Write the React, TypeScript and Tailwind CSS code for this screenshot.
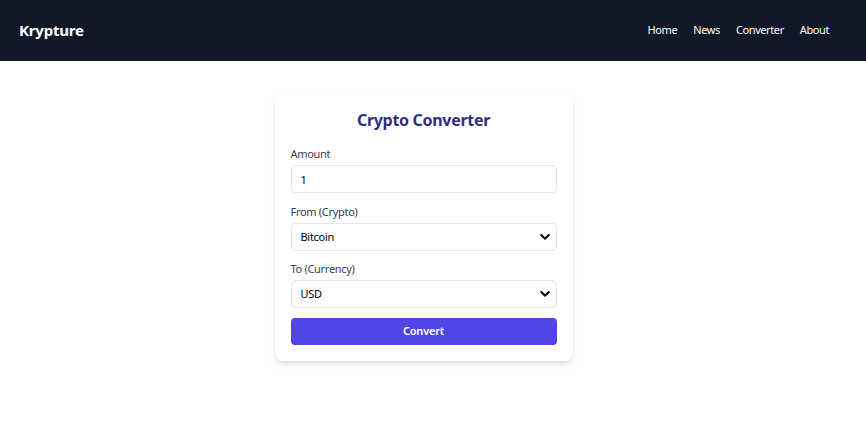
import { useState } from 'react'

function Chevron() {
  return (
    <svg
      viewBox="0 0 12 8"
      className="pointer-events-none absolute right-[7px] top-1/2 h-[7px] w-[10px] -translate-y-1/2"
      fill="none"
      stroke="#111"
      strokeWidth="2.6"
      strokeLinecap="round"
      strokeLinejoin="round"
    >
      <path d="M1.5 1.5 6 6l4.5-4.5" />
    </svg>
  )
}

export default function App() {
  const [amount, setAmount] = useState('1')
  const [crypto, setCrypto] = useState('bitcoin')
  const [currency, setCurrency] = useState('usd')

  return (
    <div className="min-h-screen bg-white font-['Noto_Sans',sans-serif]">
      <header className="flex h-[61px] items-center justify-between bg-[#111827] pl-[19px] pr-[37px]">
        <div className="text-[15px] font-bold tracking-[-0.2px] text-white">Krypture</div>
        <nav className="flex gap-4 text-[11px] tracking-[-0.4px] text-white">
          <a href="#">Home</a>
          <a href="#">News</a>
          <a href="#">Converter</a>
          <a href="#">About</a>
        </nav>
      </header>

      <main className="flex justify-center pr-[19px] pt-[32px]">
        <div className="w-[298px] rounded-lg bg-white p-4 shadow-md">
          <h1 className="mb-[14px] text-center text-[16px] font-bold leading-[22px] tracking-[-0.3px] text-[#312e81]">
            Crypto Converter
          </h1>

          <label className="mb-[2px] block text-[11px] leading-[18px] tracking-[-0.3px] text-[#374151]">Amount</label>
          <input
            value={amount}
            onChange={(e) => setAmount(e.target.value)}
            className="block h-[28px] w-full rounded border border-[#e5e7eb] px-[9px] text-[11px] tracking-[-0.3px] text-black outline-none"
          />

          <label className="mb-[2px] mt-[10px] block text-[11px] leading-[18px] tracking-[-0.3px] text-[#374151]">
            From (Crypto)
          </label>
          <div className="relative">
            <select
              value={crypto}
              onChange={(e) => setCrypto(e.target.value)}
              className="block h-[28px] w-full appearance-none rounded border border-[#e5e7eb] bg-white px-[9px] text-[11px] tracking-[-0.3px] text-black outline-none"
            >
              <option value="bitcoin">Bitcoin</option>
              <option value="ethereum">Ethereum</option>
            </select>
            <Chevron />
          </div>

          <label className="mb-[2px] mt-[9px] block text-[11px] leading-[18px] tracking-[-0.3px] text-[#374151]">
            To (Currency)
          </label>
          <div className="relative">
            <select
              value={currency}
              onChange={(e) => setCurrency(e.target.value)}
              className="block h-[28px] w-full appearance-none rounded border border-[#e5e7eb] bg-white px-[9px] text-[11px] tracking-[-0.3px] text-black outline-none"
            >
              <option value="usd">USD</option>
              <option value="eur">EUR</option>
            </select>
            <Chevron />
          </div>

          <button className="mt-[10px] block h-[27px] w-full rounded bg-[#4f46e5] text-[11px] font-semibold tracking-[-0.2px] text-white">
            Convert
          </button>
        </div>
      </main>
    </div>
  )
}
